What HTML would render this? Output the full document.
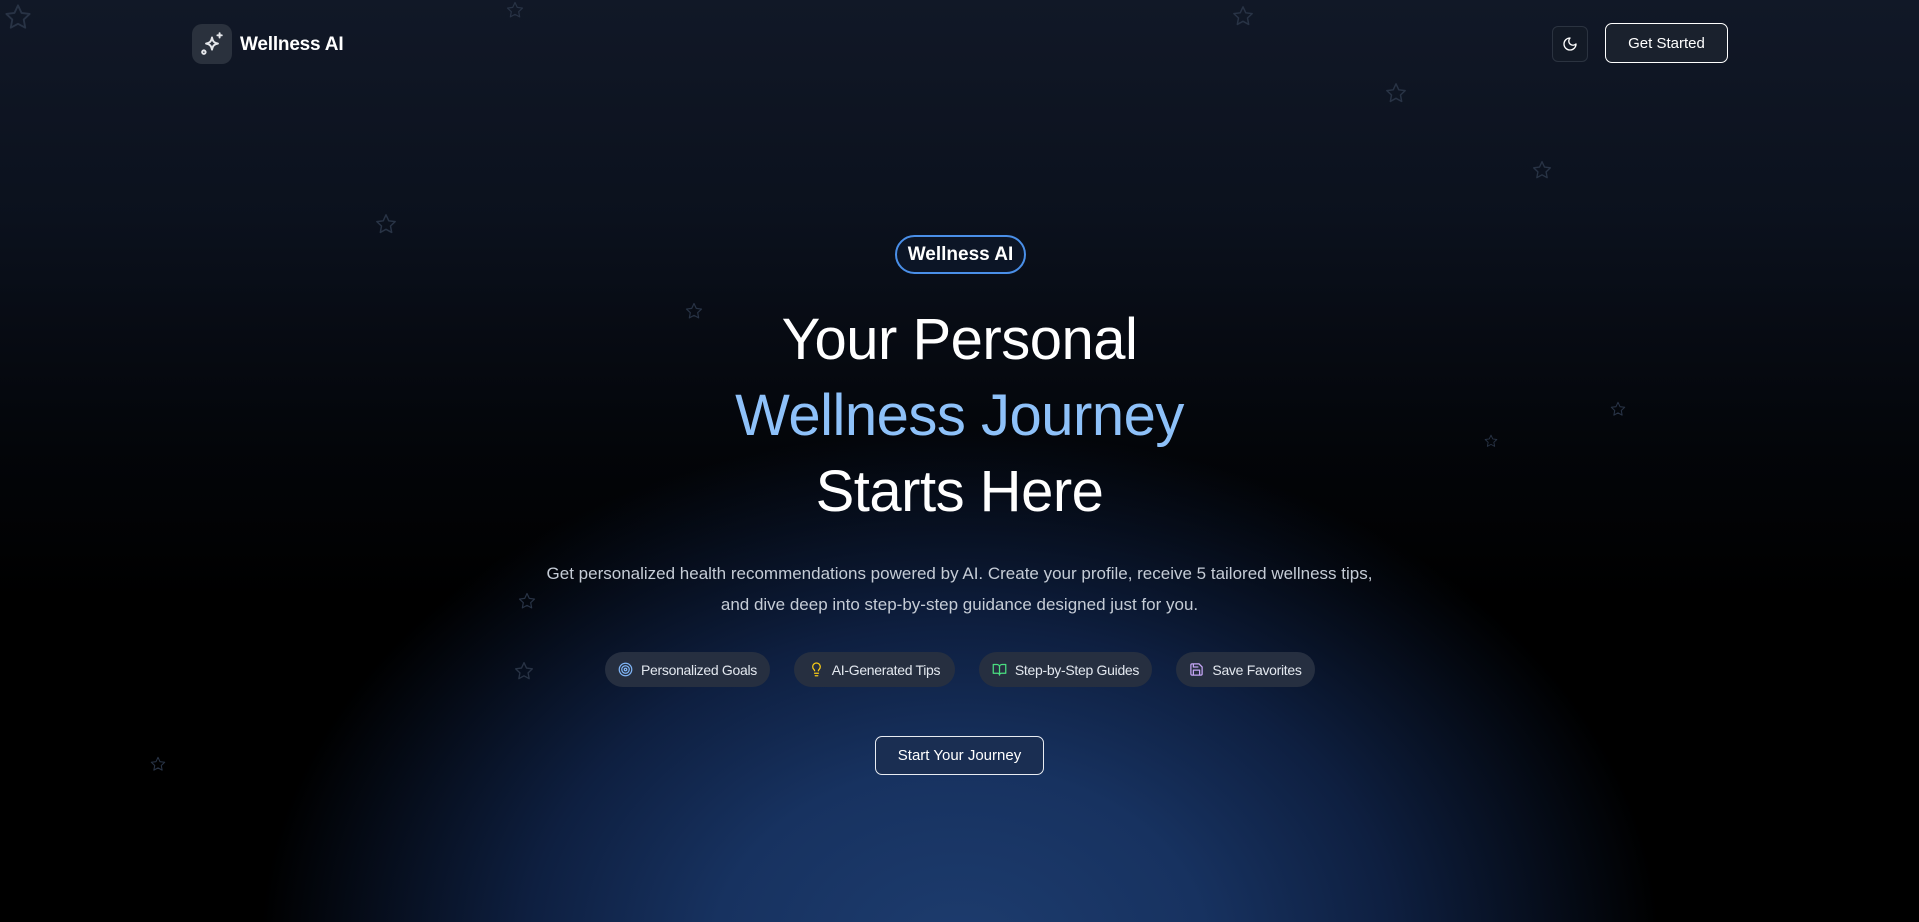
<!DOCTYPE html>
<html><head><meta charset="utf-8">
<style>
*{margin:0;padding:0;box-sizing:border-box}
html,body{width:1919px;height:922px;overflow:hidden}
body{font-family:"Liberation Sans","DejaVu Sans",sans-serif;color:#fff;position:relative;
background:
radial-gradient(ellipse 700px 520px at 960px 950px,#1d3c6e 0%,#173260 35%,#0e1f40 62%,rgba(5,10,20,0) 100%),
linear-gradient(180deg,#111827 0px,#0b111d 220px,#030509 450px,#000 600px,#000 922px);}
.star{position:absolute;fill:none;stroke:#283345;stroke-width:1.6;stroke-linejoin:round}
.logo{position:absolute;left:192px;top:24px;width:40px;height:40px;border-radius:10px;background:#2a313d;display:flex;align-items:center;justify-content:center}
.brand{position:absolute;left:240px;top:34px;font-size:19px;font-weight:bold;letter-spacing:-0.2px}
.moon{position:absolute;left:1552px;top:26px;width:36px;height:36px;border-radius:6px;border:1px solid #2b3340;background:#131a26;display:flex;align-items:center;justify-content:center}
.gs{position:absolute;left:1605px;top:23px;width:123px;height:40px;border-radius:7px;border:1.5px solid #fff;background:#1a212d;font-size:15px;display:flex;align-items:center;justify-content:center}
.badge{position:absolute;left:895px;top:235px;width:131px;height:39px;border-radius:20px;border:2px solid #4a8fe8;background:#0c1526;font-size:19px;font-weight:bold;display:flex;align-items:center;justify-content:center}
h1{position:absolute;left:0;width:1919px;top:302px;text-align:center;font-weight:normal;font-size:58px;line-height:76px;letter-spacing:-0.5px}
h1 .b{color:#8ec1f9}
p.sub{position:absolute;left:0;width:1919px;top:558px;text-align:center;font-size:17px;line-height:31px;color:#c5ccd6}
.chip{position:absolute;top:652px;height:35px;border-radius:18px;background:#262f40;font-size:14px;color:#e3e8ef;display:flex;align-items:center;justify-content:center;gap:8px;letter-spacing:-0.3px}
.btn{position:absolute;left:875px;top:736px;width:169px;height:39px;border-radius:7px;border:1.5px solid #e8ecf2;background:#1a2e52;font-size:15px;display:flex;align-items:center;justify-content:center}
</style></head><body>

<svg width="0" height="0" style="position:absolute"><defs><path id="st" d="M12 2l3 6.5 7 .9-5.1 4.8 1.3 7L12 17.8 5.8 21.2l1.3-7L2 9.4l7-.9z"/></defs></svg>
<svg class="star" style="left:4px;top:3px" width="28" height="28" viewBox="0 0 24 24"><use href="#st"/></svg>
<svg class="star" style="left:506px;top:1px" width="18" height="18" viewBox="0 0 24 24"><use href="#st"/></svg>
<svg class="star" style="left:1232px;top:5px" width="22" height="22" viewBox="0 0 24 24"><use href="#st"/></svg>
<svg class="star" style="left:1385px;top:82px" width="22" height="22" viewBox="0 0 24 24"><use href="#st"/></svg>
<svg class="star" style="left:1532px;top:160px" width="20" height="20" viewBox="0 0 24 24"><use href="#st"/></svg>
<svg class="star" style="left:375px;top:213px" width="22" height="22" viewBox="0 0 24 24"><use href="#st"/></svg>
<svg class="star" style="left:685px;top:302px" width="18" height="18" viewBox="0 0 24 24"><use href="#st"/></svg>
<svg class="star" style="left:1610px;top:401px" width="16" height="16" viewBox="0 0 24 24"><use href="#st"/></svg>
<svg class="star" style="left:1484px;top:434px" width="14" height="14" viewBox="0 0 24 24"><use href="#st"/></svg>
<svg class="star" style="left:518px;top:592px" width="18" height="18" viewBox="0 0 24 24"><use href="#st"/></svg>
<svg class="star" style="left:514px;top:661px" width="20" height="20" viewBox="0 0 24 24"><use href="#st"/></svg>
<svg class="star" style="left:150px;top:756px" width="16" height="16" viewBox="0 0 24 24"><use href="#st"/></svg>

<div class="logo"><svg width="26" height="26" viewBox="0 0 24 24" fill="none" stroke="#e5e7eb" stroke-width="1.8" stroke-linecap="round" stroke-linejoin="round"><path d="M11 4c.6 3.6 2 5 5.5 5.6-3.5.6-4.9 2-5.5 5.6-.6-3.6-2-5-5.5-5.6C9 9 10.4 7.6 11 4z" transform="translate(1 2)"/><path d="M19 2v4M17 4h4"/><circle cx="4.5" cy="19.5" r="1.6"/></svg></div>
<div class="brand">Wellness AI</div>

<div class="moon"><svg width="16" height="16" viewBox="0 0 24 24" fill="none" stroke="#fff" stroke-width="2" stroke-linecap="round" stroke-linejoin="round"><path d="M12 3a6 6 0 0 0 9 9 9 9 0 1 1-9-9z"/></svg></div>
<div class="gs">Get Started</div>

<div class="badge">Wellness AI</div>
<h1>Your Personal<br><span class="b">Wellness Journey</span><br>Starts Here</h1>
<p class="sub">Get personalized health recommendations powered by AI. Create your profile, receive 5 tailored wellness tips,<br>and dive deep into step-by-step guidance designed just for you.</p>

<div class="chip" style="left:605px;width:165px"><svg width="15" height="15" viewBox="0 0 24 24" fill="none" stroke="#7fb4f5" stroke-width="2"><circle cx="12" cy="12" r="10"/><circle cx="12" cy="12" r="6"/><circle cx="12" cy="12" r="2"/></svg>Personalized Goals</div>
<div class="chip" style="left:794px;width:161px"><svg width="15" height="15" viewBox="0 0 24 24" fill="none" stroke="#facc15" stroke-width="2" stroke-linecap="round"><path d="M15 14c.2-1 .7-1.7 1.5-2.5A6 6 0 1 0 6 8c0 1 .2 2.2 1.5 3.5.7.7 1.3 1.5 1.5 2.5M9 18h6M10 22h4"/></svg>AI-Generated Tips</div>
<div class="chip" style="left:979px;width:173px"><svg width="15" height="15" viewBox="0 0 24 24" fill="none" stroke="#4ade80" stroke-width="2" stroke-linejoin="round"><path d="M2 4h6a4 4 0 0 1 4 4v13a3 3 0 0 0-3-3H2zM22 4h-6a4 4 0 0 0-4 4v13a3 3 0 0 1 3-3h7z"/></svg>Step-by-Step Guides</div>
<div class="chip" style="left:1176px;width:139px"><svg width="15" height="15" viewBox="0 0 24 24" fill="none" stroke="#c4a5f5" stroke-width="2" stroke-linejoin="round"><path d="M19 21H5a2 2 0 0 1-2-2V5a2 2 0 0 1 2-2h11l5 5v11a2 2 0 0 1-2 2z"/><path d="M17 21v-8H7v8M7 3v5h8"/></svg>Save Favorites</div>

<div class="btn">Start Your Journey</div>
</body></html>
